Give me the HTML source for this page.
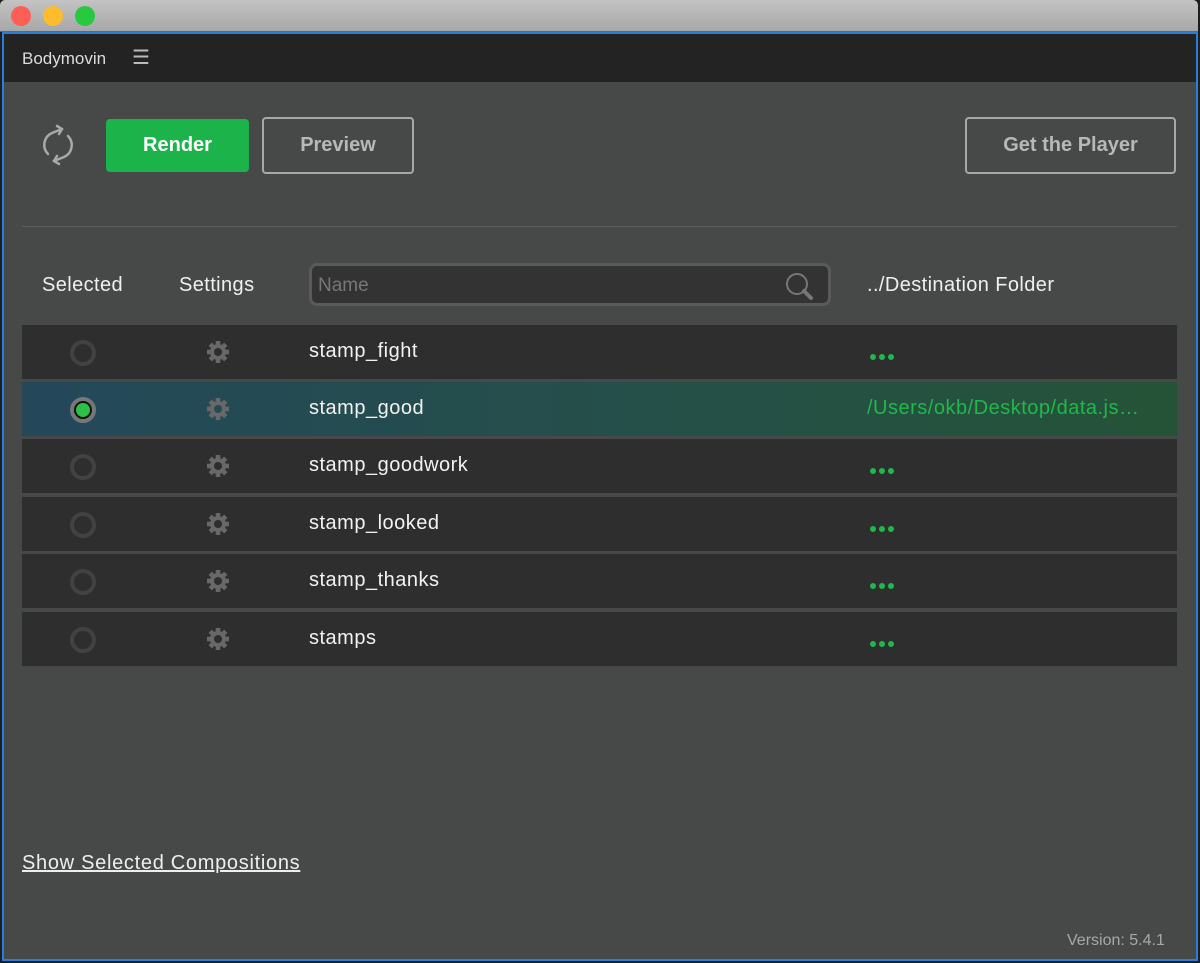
<!DOCTYPE html>
<html><head><meta charset="utf-8"><style>
*{margin:0;padding:0;box-sizing:border-box}
body{width:1200px;height:963px;background:#1e1e1e;position:relative;overflow:hidden;font-family:"Liberation Sans",sans-serif}
.tb{position:absolute;left:0;top:0;width:1198px;height:32px;background:linear-gradient(#c4c3c3,#a9a8a8);border-radius:5px 5px 0 0;border-bottom:1px solid #666}
.dot{position:absolute;top:6px;width:20px;height:20px;border-radius:50%}
.win{position:absolute;left:2px;top:32px;width:1196px;height:929px;border:2px solid #2c7fd8;background:#474848}
.hdr{position:absolute;left:0;top:0;width:100%;height:48px;background:#232323;color:#ddd;font-size:17px}
.abs{position:absolute}
.btn{position:absolute;border-radius:4px;font-weight:bold;font-size:20px;text-align:center;color:#b8b8b8;border:2px solid #a8a8a8}
.row{position:absolute;left:18px;width:1155px;height:54px;background:#2e2e2e}
.rad{position:absolute;left:48px;top:15px;width:26px;height:26px;border-radius:50%;border:4px solid #424242}
.nm{position:absolute;left:287px;top:15px;color:#f2f2f2;font-size:20px;letter-spacing:0.5px}
.dots{position:absolute;left:848px;top:29px;line-height:0}
.dots span{display:inline-block;width:6px;height:6px;border-radius:50%;background:#1fb84b;margin-right:3px}
.col{position:absolute;top:240px;color:#f0f0f0;font-size:20px;letter-spacing:0.4px}
.g{position:absolute;left:184px;top:15px}
</style></head><body>
<svg width="0" height="0" style="position:absolute"><defs><g id="t"><rect x="-2.3" y="-11" width="4.6" height="4.5"/></g>
<g id="gear"><g fill="#686868"><circle r="8"/><use href="#t"/><use href="#t" transform="rotate(45)"/><use href="#t" transform="rotate(90)"/><use href="#t" transform="rotate(135)"/><use href="#t" transform="rotate(180)"/><use href="#t" transform="rotate(225)"/><use href="#t" transform="rotate(270)"/><use href="#t" transform="rotate(315)"/></g></g></defs></svg>
<div class="tb">
<div class="dot" style="left:11px;background:#fd5f57"></div>
<div class="dot" style="left:43px;background:#fdbc2e"></div>
<div class="dot" style="left:75px;background:#28c840"></div>
</div>
<div class="win">
<div class="hdr"><span class="abs" style="left:18px;top:15px">Bodymovin</span><span class="abs" style="left:128px;top:11px;font-size:20px;color:#bbb">&#9776;</span></div>
<svg class="abs" style="left:34px;top:89px" width="40" height="44" viewBox="0 0 40 44"><g fill="none" stroke="#a9a9a9" stroke-width="2.5" stroke-linecap="round"><path d="M10 31 A13 13 0 0 1 14 10 L24 6"/><path d="M19 3 L24 6 L21 11"/><path d="M30 13 A13 13 0 0 1 26 34 L16 38"/><path d="M21 41 L16 38 L19 33"/></g></svg>
<div class="btn" style="left:102px;top:85px;width:143px;height:53px;background:#1db34b;border:none;color:#fff;line-height:53px">Render</div>
<div class="btn" style="left:258px;top:83px;width:152px;height:57px;line-height:53px">Preview</div>
<div class="btn" style="left:961px;top:83px;width:211px;height:57px;line-height:53px">Get the Player</div>
<div class="abs" style="left:18px;top:192px;width:1155px;height:1px;background:#5e5e5e"></div>
<div class="col" style="left:38px">Selected</div>
<div class="col" style="left:175px">Settings</div>
<div class="abs" style="left:305px;top:229px;width:522px;height:43px;border:3px solid #5a5a5a;border-radius:8px;background:#333"><span class="abs" style="left:6px;top:9px;color:#777;font-size:19px">Name</span>
<svg class="abs" style="left:472px;top:5px" width="32" height="30"><circle cx="13" cy="13" r="10" fill="none" stroke="#777" stroke-width="2"/><path d="M20 20 L27 27" stroke="#777" stroke-width="4" stroke-linecap="round"/></svg></div>
<div class="col" style="left:863px">../Destination Folder</div>

<div class="row" style="top:291px"><div class="rad"></div><svg class="g" width="24" height="24" viewBox="-12 -12 24 24"><use href="#gear"/><circle r="4" fill="#2e2e2e"/></svg><div class="nm">stamp_fight</div><div class="dots"><span></span><span></span><span></span></div></div>

<div class="row" style="top:348px;background:linear-gradient(90deg,#24485a,#255047 60%,#255337)"><div class="rad" style="border-color:#777;background:#111;"><div style="position:absolute;left:2px;top:2px;width:14px;height:14px;border-radius:50%;background:#2bc048"></div></div><svg class="g" width="24" height="24" viewBox="-12 -12 24 24"><use href="#gear"/><circle r="4" fill="#254a52"/></svg><div class="nm">stamp_good</div><div class="abs" style="left:845px;top:15px;color:#1fb84b;font-size:20px;letter-spacing:0.5px">/Users/okb/Desktop/data.js…</div></div>

<div class="row" style="top:405px"><div class="rad"></div><svg class="g" width="24" height="24" viewBox="-12 -12 24 24"><use href="#gear"/><circle r="4" fill="#2e2e2e"/></svg><div class="nm">stamp_goodwork</div><div class="dots"><span></span><span></span><span></span></div></div>

<div class="row" style="top:463px"><div class="rad"></div><svg class="g" width="24" height="24" viewBox="-12 -12 24 24"><use href="#gear"/><circle r="4" fill="#2e2e2e"/></svg><div class="nm">stamp_looked</div><div class="dots"><span></span><span></span><span></span></div></div>

<div class="row" style="top:520px"><div class="rad"></div><svg class="g" width="24" height="24" viewBox="-12 -12 24 24"><use href="#gear"/><circle r="4" fill="#2e2e2e"/></svg><div class="nm">stamp_thanks</div><div class="dots"><span></span><span></span><span></span></div></div>

<div class="row" style="top:578px"><div class="rad"></div><svg class="g" width="24" height="24" viewBox="-12 -12 24 24"><use href="#gear"/><circle r="4" fill="#2e2e2e"/></svg><div class="nm">stamps</div><div class="dots"><span></span><span></span><span></span></div></div>

<div class="abs" style="left:18px;top:818px;color:#eee;font-size:20px;letter-spacing:0.7px;text-decoration:underline">Show Selected Compositions</div>
<div class="abs" style="left:1063px;top:898px;color:#a8a8a8;font-size:16px">Version: 5.4.1</div>
</div>
</body></html>
